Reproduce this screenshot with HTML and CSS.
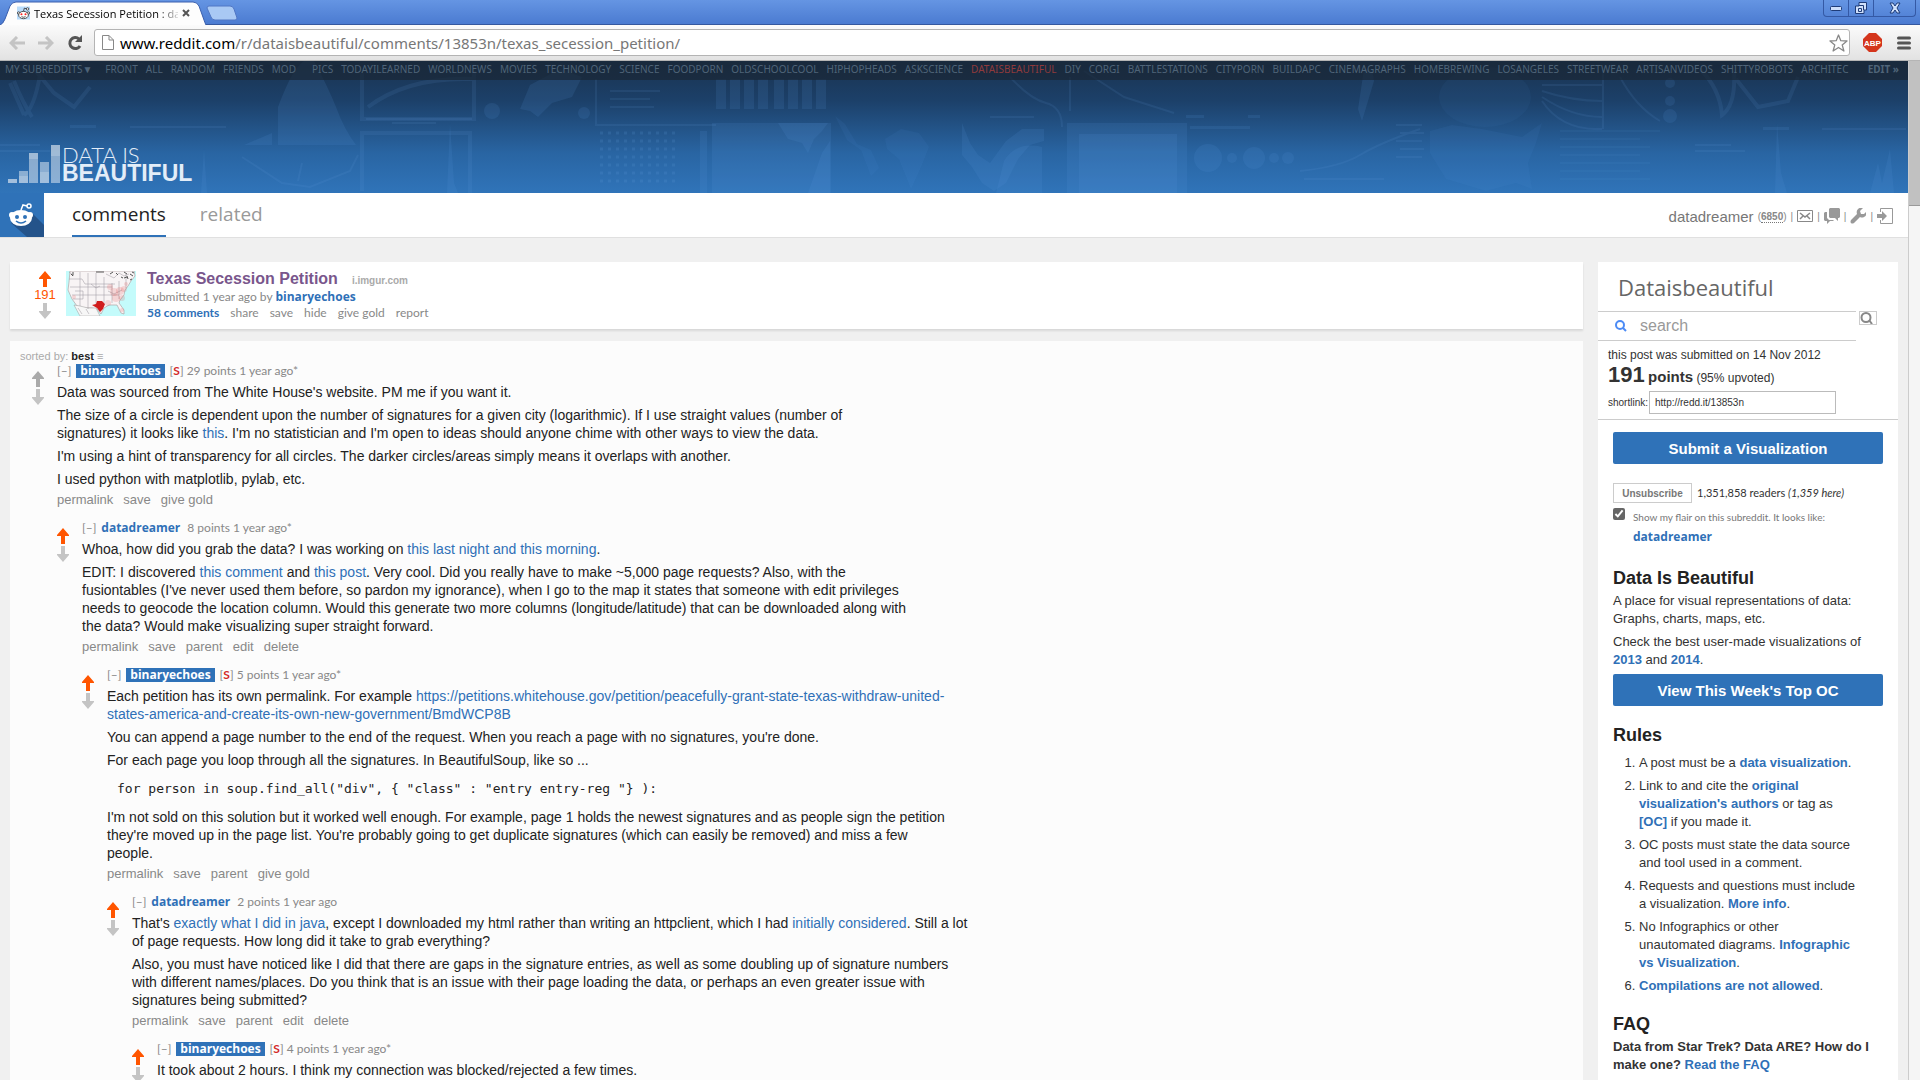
FILE: index.html
```html
<!DOCTYPE html>
<html lang="en">
<head>
    <meta charset="utf-8">
    <title>Texas Secession Petition : dataisbeautiful</title>
    <link rel="stylesheet" href="styles.css">
</head>
<body>
    <svg width="0" height="0" class="defs">
        <symbol id="up" viewBox="0 0 12 16"><path d="M6 0l6 7v1H8v8H4V8H0V7z"/></symbol>
        <symbol id="down" viewBox="0 0 12 16"><path d="M6 16l6-7V8H8V0H4v8H0v1z"/></symbol>
    </svg>

    <!-- browser window -->
    <div class="titlebar">
        <div class="tab">
            <svg class="tab-shape" width="206" height="24" viewBox="0 0 206 24"><path d="M0 24q3-1 5-6L10 5q2-4 6-4h177q4 0 6 4l5 14q1 3 2 5z" fill="#fdfdfd"/><path d="M0 24q3-1 5-6L10 5q2-4 6-4h177q4 0 6 4l5 14q1 3 2 5" fill="none" stroke="#3a5fae"/></svg>
            <svg class="favicon" width="16" height="16" viewBox="0 0 16 16"><path fill="#b9dcfb" d="M0 0h16v16H0z"/><path d="M8 6l1-4 3 1" fill="none" stroke="#333"/><circle cx="13" cy="3" r="1.5" fill="#fff" stroke="#333"/><circle cx="2" cy="8" r="1.5" fill="#fff" stroke="#333"/><circle cx="14" cy="8" r="1.5" fill="#fff" stroke="#333"/><ellipse cx="8" cy="10.500" rx="6" ry="4.500" fill="#fff" stroke="#333"/><circle cx="5.500" cy="9.500" r="1.300" fill="#f22"/><circle cx="10.500" cy="9.500" r="1.300" fill="#f22"/><path d="M5.500 12.500q2.500 1.500 5 0" fill="none" stroke="#333"/></svg>
            <span class="tab-title">Texas Secession Petition : da</span>
            <button class="plain" aria-label="Close tab"><svg width="8" height="8" viewBox="0 0 8 8"><path d="M1 1l6 6M7 1L1 7" stroke="#555" stroke-width="2"/></svg></button>
        </div>
        <button class="plain newtab" aria-label="New tab"><svg width="32" height="16" viewBox="0 0 32 16"><path d="M3 1h21q3 0 4 3l3 9q0 2-2 2H9q-3 0-4-3L1 3q0-2 2-2z" fill="#a9c9f4" stroke="#5177c4"/></svg></button>
        <div class="winbtns">
            <button class="plain" aria-label="Minimize"><svg width="12" height="8" viewBox="0 0 12 8"><rect x=".5" y="2.500" width="11" height="4" rx="1" fill="#cfe0fb" stroke="#1f3c78"/></svg></button>
            <button class="plain" aria-label="Restore"><svg width="14" height="14" viewBox="0 0 14 14"><path d="M5 1.500h7.500v7.500H10v3.500H1.500V5H5z" fill="#cfe0fb" stroke="#1f3c78"/><path d="M4.500 7.500h3v3h-3zM9.500 9V4.500H5" fill="none" stroke="#1f3c78"/></svg></button>
            <button class="plain close" aria-label="Close"><svg width="12" height="12" viewBox="0 0 12 12"><path d="M1 1h3l2 3 2-3h3L8 6l3 5H8L6 8l-2 3H1l3-5z" fill="#cfe0fb" stroke="#1f3c78"/></svg></button>
        </div>
    </div>
    <div class="toolbar">
        <button class="plain" aria-label="Back"><svg width="16" height="14" viewBox="0 0 16 14"><path d="M8 1L2 7l6 6M2 7h14" fill="none" stroke="#c4c4c4" stroke-width="3"/></svg></button>
        <button class="plain" aria-label="Forward"><svg width="16" height="14" viewBox="0 0 16 14"><path d="M8 1l6 6-6 6M14 7H0" fill="none" stroke="#c4c4c4" stroke-width="3"/></svg></button>
        <button class="plain" aria-label="Reload"><svg width="16" height="16" viewBox="0 0 16 16"><path d="M12 4A5.500 5.500 0 1 0 13 11" fill="none" stroke="#555" stroke-width="3"/><path d="M15 0v7H8z" fill="#555"/></svg></button>
        <div class="omnibox">
            <svg width="12" height="15" viewBox="0 0 12 15"><path d="M.5.500H7L11.500 5v9.500H.5zM7 .5V5h4.500" fill="#fff" stroke="#888"/></svg>
            <div class="url"><b>www.reddit.com</b>/r/dataisbeautiful/comments/13853n/texas_secession_petition/</div>
            <svg width="19" height="18" viewBox="0 0 19 18"><path d="M9.500 1l2.300 5.700 6.200.3-4.800 3.900 1.700 6.100-5.400-3.500L4.100 17l1.700-6.100L1 7l6.200-.3z" fill="#fff" stroke="#888" stroke-width="1.300" stroke-linejoin="round"/></svg>
        </div>
        <button class="plain" aria-label="AdBlock Plus"><svg width="19" height="19" viewBox="0 0 19 19"><path d="M6 0h7l6 6v7l-6 6H6l-6-6V6z" fill="#d4351c"/><text x="9.500" y="13" text-anchor="middle" class="abp">ABP</text></svg></button>
        <button class="plain menu" aria-label="Menu"><svg width="14" height="14" viewBox="0 0 14 14"><path d="M1.500 2h11M1.500 7h11M1.500 12h11" stroke="#555" stroke-width="3" stroke-linecap="round"/></svg></button>
    </div>

    <div class="viewport">
        <div class="page">
            <header class="header">
                <svg class="collage" viewBox="0 0 1908 132" preserveAspectRatio="xMinYMin slice">
                    <g fill="#5b9be0" fill-opacity=".13">
                        <path d="M278 84V46q6-16 12-28 8-14 14-18h10q14 26 22 46 8 22 20 38z"/><path d="M244 84l28-12v12z"/>
                        <path d="M716 18h10v30h-10zM730 18h10v30h-10zM744 18h10v30h-10zM758 18h10v30h-10zM774 18h10v30h-10zM788 18h10v30h-10zM802 18h10v30h-10zM816 18h10v30h-10zM700 70h7v62h-7z"/>
                        <path d="M712 62h119v70h-119z"/><path d="M778 62h50l-6 8-8 8-6 14-6-10-14-4z"/>
                        <path d="M822 92l8-12v52h-22z"/>
                        <path d="M835 55l10 8 12 20 14 6 8 18-8 8-10-26-14-10zM885 78l16-10 18 4 10 14-8 20-10 22-12-30-12-10z" fill-opacity=".08"/>
                        <path d="M962 62l8 20 8 12 12 8 16-22 16-12h22v12l-14 4-12 14-12 24-12 8-12-8-10-16-10-12z"/><path d="M1004 100q12-20 38-14v46h-46z"/>
                        <path d="M1067 62h120v70h-120z"/><path d="M1079 73h98v59h-98z"/>
                        <circle cx="1208" cy="97" r="14"/><circle cx="1232" cy="97" r="5"/><circle cx="1254" cy="97" r="11"/><circle cx="1274" cy="97" r="5"/><circle cx="1288" cy="97" r="6"/>
                        <path d="M1186 54h18v3h-18zM1248 54h12v3h-12zM1190 65h60v3h-60zM1362 60l12-40-2-12h-8l-6 40z"/>
                        <ellipse cx="1485" cy="36" rx="46" ry="30" fill-opacity=".06"/>
                        <path d="M1430 70l22-6 30 4 40 8 20-14-6 20-8 20 4 26-16-6-30 8-40-12-16-26z" fill-opacity=".08"/>
                        <circle cx="1670" cy="22" r="5"/><circle cx="1670" cy="40" r="5"/><circle cx="1670" cy="55" r="7"/>
                        <path d="M1775 132l2-70 4 50 6 20zM1870 132l8-30 4 20 8-34 4 44zM201 132l3-44 3 44zM447 132l3-70 4 60 4 10z"/>
                        <circle cx="492" cy="50" r="8"/><circle cx="584" cy="52" r="6"/><path d="M520 48l10-24 30-16 22 8-10 20-20 6-14 14-8-6zM70 64h26v3H70zM1763 66h26v3h-26z"/>
                    </g>
                    <g fill="none" stroke="#6aa6e6" stroke-opacity=".11" stroke-width="2">
                        <path d="M14 20q8 20 18 36M34 8l20 24 20 14 16-20M10 22l14 32M24 54q10-6 16-40" stroke-width="4"/>
                        <path d="M1700 8q20 20 22 46 14-10 12-44M1736 18l22 28 30-6 10-24" stroke-width="4"/>
                        <path d="M362 12v46h112V10M368 46q40-30 104-28M362 130V72h108v60" stroke-width="4"/>
                        <path d="M242 96l40 26 28 4 40-16 8-16M298 120l4-18M366 58h106"/>
                        <path d="M596 18v46h120M610 30h50M610 38h40M610 46h44M1010 16q20 22 36 26t16 24M1084 10l40 26 50 16M1070 16v34"/>
                        <path d="M1300 110q40-4 60-16t60-26M1304 118h80M1396 64h26M1400 72h24M1396 80h26M1400 88h24M1396 96h26"/>
                        <path d="M1542 24h60M1542 30q30 10 60 10M1542 36q30 20 60 20M1542 40q20 30 60 28M1603 12v56M1620 16q16 30 40 44"/>
                        <path d="M1560 70h100M1560 78h80M1560 86h90M1560 94h80M1560 102h90M1560 110h80M1560 118h90" stroke-opacity=".07"/>
                        <path d="M1695 84h36M1695 90h50M0 84h40M0 90h50M130 66h96M1822 68h84M392 62h44M990 56h44"/>
                    </g>
                    <g stroke="#6aa6e6" stroke-opacity=".15" stroke-width="3" stroke-dasharray="3 5"><path d="M600 72h80M600 80h80M600 88h80M600 96h80M600 104h80M600 112h80M600 120h80"/></g>
                </svg>
                <nav class="sr-bar">
                    <div class="sr-list">
                        <a href="#" class="my">MY SUBREDDITS▼</a>
                        <a href="#">FRONT</a><a href="#">ALL</a><a href="#">RANDOM</a><a href="#">FRIENDS</a><a href="#">MOD</a><a href="#" class="first">PICS</a><a href="#">TODAYILEARNED</a><a href="#">WORLDNEWS</a><a href="#">MOVIES</a><a href="#">TECHNOLOGY</a><a href="#">SCIENCE</a><a href="#">FOODPORN</a><a href="#">OLDSCHOOLCOOL</a><a href="#">HIPHOPHEADS</a><a href="#">ASKSCIENCE</a><a href="#" class="current">DATAISBEAUTIFUL</a><a href="#">DIY</a><a href="#">CORGI</a><a href="#">BATTLESTATIONS</a><a href="#">CITYPORN</a><a href="#">BUILDAPC</a><a href="#">CINEMAGRAPHS</a><a href="#">HOMEBREWING</a><a href="#">LOSANGELES</a><a href="#">STREETWEAR</a><a href="#">ARTISANVIDEOS</a><a href="#">SHITTYROBOTS</a><a href="#">ARCHITEC</a>
                    </div>
                    <a href="#" class="sr-edit">EDIT »</a>
                </nav>
                <a href="#" class="logo">
                    <svg width="52" height="38" viewBox="0 0 52 38"><g fill="#fff" fill-opacity=".45"><path d="M0 34h9v4H0zM11 26h9v12h-9zM21 8h9v30h-9zM32 17h9v21h-9zM43 0h9v38h-9z"/><path d="M0 34h9v4H0zM11 31h9v7h-9zM21 8h9v6h-9zM32 27h9v11h-9zM43 0h9v11h-9z" fill-opacity=".2"/></g></svg>
                    <span class="logo-text"><span class="thin">DATA IS</span><strong>BEAUTIFUL</strong></span>
                </a>
            </header>

            <div class="tabbar">
                <a href="#" class="snoo"><svg width="44" height="44" viewBox="0 0 44 44"><path fill="#2f72b8" d="M0 0h44v44H0z"/><path d="M32 20l12 12v12H27L11 30z" fill="#24538a"/><g fill="#fff"><circle cx="12" cy="22" r="3"/><circle cx="30" cy="22" r="3"/><ellipse cx="21" cy="25" rx="11" ry="8"/></g><path d="M21 17l2-5 4 1" fill="none" stroke="#fff" stroke-width="1.500"/><circle cx="29" cy="13" r="2" fill="none" stroke="#fff" stroke-width="1.500"/><circle cx="17" cy="24" r="2" fill="#2f72b8"/><circle cx="25" cy="24" r="2" fill="#2f72b8"/><path d="M16 28q5 4 10 0" fill="none" stroke="#2f72b8" stroke-width="1.500"/></svg></a>
                <nav class="tabs">
                    <a href="#" class="selected">comments</a>
                    <a href="#">related</a>
                </nav>
                <div class="user">
                    <a href="#" class="me">datadreamer</a>
                    <span>(<b>6850</b>)</span>
                    <i>|</i>
                    <a href="#" aria-label="messages"><svg width="16" height="12" viewBox="0 0 16 12"><path d="M.5.500h15v11H.5z" fill="#fff" stroke="#888"/><path d="M3 3l5 4 5-4M3 9l3-3M13 9l-3-3" fill="none" stroke="#888" stroke-width="1.500"/></svg></a>
                    <i>|</i>
                    <a href="#" aria-label="chat"><svg width="16" height="16" viewBox="0 0 16 16"><path d="M6 0h9l1 1v8l-1 1h-1v3l-3-3H6L5 9V1zM1 4h2v6l2 2h4l1 1H6l-3 3v-3H1l-1-1V5z" fill="#999"/></svg></a>
                    <i>|</i>
                    <a href="#" aria-label="preferences"><svg width="16" height="16" viewBox="0 0 16 16"><path d="M13 0l-3 3 1 3 3 0 2-2q1 4-2 5-2 1-4 0l-6 6q-2 1-3 0t0-3l6-6Q6 3 8 1q2-2 5-1z" fill="#999"/></svg></a>
                    <i>|</i>
                    <a href="#" aria-label="logout"><svg width="16" height="16" viewBox="0 0 16 16"><path d="M3.500 4V.5h12v15h-12V12" fill="none" stroke="#999"/><path d="M0 6h5V3l5 5-5 5v-3H0z" fill="#999"/></svg></a>
                </div>
            </div>

            <div class="columns">
                <main class="content">
                    <section class="post">
                        <div class="votes">
                            <button class="plain up on" aria-label="upvote"><svg width="12" height="16"><use href="#up"/></svg></button>
                            <span class="score">191</span>
                            <button class="plain down" aria-label="downvote"><svg width="12" height="16"><use href="#down"/></svg></button>
                        </div>
                        <svg class="thumb" width="70" height="45" viewBox="0 0 70 45">
                            <path fill="#c4fbfb" d="M0 0h70v45H0z"/>
                            <path d="M4 0h64l1 5-4 5-3 5-3 4-1 5-4 5-1 3 5 7v4l-3-1-4-8-8 0-5 3-3 6-4-5-5-1-8 0-7-2-5-7-4-9 1-8z" fill="#f8f4f5" stroke="#a99" stroke-width=".6"/>
                            <path d="M8 34l6 1 8 2 8 0 4 8H14z" fill="#f7f7f7" stroke="#999" stroke-width=".5"/>
                            <path d="M3 8h13l3 5h30M4 16h42M6 24h47M9 20h8v8H7M14 1v34M22 2v36M30 2v32M38 6v26M46 12v20M53 10v18M60 3v14M3 1l5 4M40 3l8 4 5-5 5 3 5-2M25 13l5 4 4-2M42 20l6 3 8-4M12 37l4 6M20 38l3 5" fill="none" stroke="#9a949c" stroke-width=".5"/>
                            <path d="M50 2l2 2M58 1l3 2M64 3l3 2M44 3l3-2M58 7l3-1M64 9l2-1M5 3l2 2M7 1v3M30 1l8 0M55 6l2 1M61 5l1 3M66 1l2 1" stroke="#555"/>
                            <path d="M31 30h5l3 3-2 5-3 3-3-4-5-3 4-1z" fill="#d01c1c"/>
                            <g fill="#e03030" fill-opacity=".16"><circle cx="48" cy="21" r="4"/><circle cx="54" cy="20" r="4"/><circle cx="50" cy="27" r="4"/><circle cx="58" cy="18" r="3"/><circle cx="60" cy="13" r="2"/><circle cx="42" cy="32" r="3"/><circle cx="56" cy="39" r="2"/><circle cx="8" cy="26" r="2"/><circle cx="44" cy="16" r="3"/><circle cx="56" cy="27" r="3"/></g>
                        </svg>
                        <div class="post-entry">
                            <p class="title"><a href="#">Texas Secession Petition</a><span class="domain">i.imgur.com</span></p>
                            <p class="tagline">submitted 1 year ago by <a href="#" class="author">binaryechoes</a></p>
                            <p class="links"><a href="#" class="count">58 comments</a><a href="#">share</a><a href="#">save</a><a href="#">hide</a><a href="#">give gold</a><a href="#">report</a></p>
                        </div>
                    </section>

                    <section class="comments">
                        <p class="sort">sorted by: <b>best</b> ≡</p>
                        <div class="comment">
                            <div class="votes">
                                <button class="plain up" aria-label="upvote"><svg width="12" height="16"><use href="#up"/></svg></button>
                                <button class="plain down" aria-label="downvote"><svg width="12" height="16"><use href="#down"/></svg></button>
                            </div>
                            <div class="entry">
                                <p class="tagline"><a href="#">[–]</a><a href="#" class="author op">binaryechoes</a>[<b class="s">S</b>] 29 points 1 year ago*</p>
                                <div class="md">
                                    <p>Data was sourced from The White House's website. PM me if you want it.</p>
                                    <p>The size of a circle is dependent upon the number of signatures for a given city (logarithmic). If I use straight values (number of signatures) it looks like <a href="#">this</a>. I'm no statistician and I'm open to ideas should anyone chime with other ways to view the data.</p>
                                    <p>I'm using a hint of transparency for all circles. The darker circles/areas simply means it overlaps with another.</p>
                                    <p>I used python with matplotlib, pylab, etc.</p>
                                </div>
                                <p class="flat"><a href="#">permalink</a><a href="#">save</a><a href="#">give gold</a></p>

                                <div class="comment">
                                    <div class="votes">
                                        <button class="plain up on" aria-label="upvote"><svg width="12" height="16"><use href="#up"/></svg></button>
                                        <button class="plain down" aria-label="downvote"><svg width="12" height="16"><use href="#down"/></svg></button>
                                    </div>
                                    <div class="entry">
                                        <p class="tagline"><a href="#">[–]</a><a href="#" class="author">datadreamer</a>8 points 1 year ago*</p>
                                        <div class="md">
                                            <p>Whoa, how did you grab the data? I was working on <a href="#">this last night and this morning</a>.</p>
                                            <p>EDIT: I discovered <a href="#">this comment</a> and <a href="#">this post</a>. Very cool. Did you really have to make ~5,000 page requests? Also, with the fusiontables (I've never used them before, so pardon my ignorance), when I go to the map it states that someone with edit privileges needs to geocode the location column. Would this generate two more columns (longitude/latitude) that can be downloaded along with the data? Would make visualizing super straight forward.</p>
                                        </div>
                                        <p class="flat"><a href="#">permalink</a><a href="#">save</a><a href="#">parent</a><a href="#">edit</a><a href="#">delete</a></p>

                                        <div class="comment">
                                            <div class="votes">
                                                <button class="plain up on" aria-label="upvote"><svg width="12" height="16"><use href="#up"/></svg></button>
                                                <button class="plain down" aria-label="downvote"><svg width="12" height="16"><use href="#down"/></svg></button>
                                            </div>
                                            <div class="entry">
                                                <p class="tagline"><a href="#">[–]</a><a href="#" class="author op">binaryechoes</a>[<b class="s">S</b>] 5 points 1 year ago*</p>
                                                <div class="md">
                                                    <p>Each petition has its own permalink. For example <a href="#">https://petitions.whitehouse.gov/petition/peacefully-grant-state-texas-withdraw-united-states-america-and-create-its-own-new-government/BmdWCP8B</a></p>
                                                    <p>You can append a page number to the end of the request. When you reach a page with no signatures, you're done.</p>
                                                    <p>For each page you loop through all the signatures. In BeautifulSoup, like so ...</p>
                                                    <pre><code>for person in soup.find_all("div", { "class" : "entry entry-reg "} ):</code></pre>
                                                    <p>I'm not sold on this solution but it worked well enough. For example, page 1 holds the newest signatures and as people sign the petition they're moved up in the page list. You're probably going to get duplicate signatures (which can easily be removed) and miss a few people.</p>
                                                </div>
                                                <p class="flat"><a href="#">permalink</a><a href="#">save</a><a href="#">parent</a><a href="#">give gold</a></p>

                                                <div class="comment">
                                                    <div class="votes">
                                                        <button class="plain up on" aria-label="upvote"><svg width="12" height="16"><use href="#up"/></svg></button>
                                                        <button class="plain down" aria-label="downvote"><svg width="12" height="16"><use href="#down"/></svg></button>
                                                    </div>
                                                    <div class="entry">
                                                        <p class="tagline"><a href="#">[–]</a><a href="#" class="author">datadreamer</a>2 points 1 year ago</p>
                                                        <div class="md">
                                                            <p>That's <a href="#">exactly what I did in java</a>, except I downloaded my html rather than writing an httpclient, which I had <a href="#">initially considered</a>. Still a lot of page requests. How long did it take to grab everything?</p>
                                                            <p>Also, you must have noticed like I did that there are gaps in the signature entries, as well as some doubling up of signature numbers with different names/places. Do you think that is an issue with their page loading the data, or perhaps an even greater issue with signatures being submitted?</p>
                                                        </div>
                                                        <p class="flat"><a href="#">permalink</a><a href="#">save</a><a href="#">parent</a><a href="#">edit</a><a href="#">delete</a></p>

                                                        <div class="comment">
                                                            <div class="votes">
                                                                <button class="plain up on" aria-label="upvote"><svg width="12" height="16"><use href="#up"/></svg></button>
                                                                <button class="plain down" aria-label="downvote"><svg width="12" height="16"><use href="#down"/></svg></button>
                                                            </div>
                                                            <div class="entry">
                                                                <p class="tagline"><a href="#">[–]</a><a href="#" class="author op">binaryechoes</a>[<b class="s">S</b>] 4 points 1 year ago*</p>
                                                                <div class="md">
                                                                    <p>It took about 2 hours. I think my connection was blocked/rejected a few times.</p>
                                                                </div>
                                                            </div>
                                                        </div>
                                                    </div>
                                                </div>
                                            </div>
                                        </div>
                                    </div>
                                </div>
                            </div>
                        </div>
                    </section>
                </main>

                <aside class="side">
                    <h1>Dataisbeautiful</h1>
                    <form class="search">
                        <div class="search-box">
                            <svg width="12" height="12" viewBox="0 0 12 12"><circle cx="5" cy="5" r="4" fill="none" stroke="#4c8bf5" stroke-width="2"/><path d="M8 8l3 3" stroke="#4c8bf5" stroke-width="2"/></svg>
                            <input type="text" placeholder="search" aria-label="search">
                        </div>
                        <button aria-label="Submit search"><svg width="13" height="12" viewBox="0 0 13 12"><circle cx="6" cy="5.500" r="4.500" fill="none" stroke="#888" stroke-width="2"/><path d="M9 8l3 4" stroke="#888" stroke-width="2"/></svg></button>
                    </form>
                    <div class="linkinfo">
                        <p>this post was submitted on 14 Nov 2012</p>
                        <p class="points"><b class="num">191</b> <b class="word">points</b> (95% upvoted)</p>
                        <p class="shortlink"><label for="shortlink">shortlink:</label><input type="text" id="shortlink" value="http://redd.it/13853n" readonly></p>
                    </div>
                    <div class="side-body">
                        <button class="big">Submit a Visualization</button>
                        <p class="subs"><button class="unsub">Unsubscribe</button><span>1,351,858 readers <em>(1,359 here)</em></span></p>
                        <p class="flair"><input type="checkbox" id="flair" checked><label for="flair">Show my flair on this subreddit. It looks like:</label></p>
                        <p class="flair-name"><a href="#" class="author">datadreamer</a></p>

                        <h2>Data Is Beautiful</h2>
                        <p>A place for visual representations of data: Graphs, charts, maps, etc.</p>
                        <p>Check the best user-made visualizations of <a href="#">2013</a> and <a href="#">2014</a>.</p>
                        <button class="big">View This Week's Top OC</button>

                        <h2>Rules</h2>
                        <ol>
                            <li>A post must be a <a href="#">data visualization</a>.</li>
                            <li>Link to and cite the <a href="#">original visualization's authors</a> or tag as <a href="#">[OC]</a> if you made it.</li>
                            <li>OC posts must state the data source and tool used in a comment.</li>
                            <li>Requests and questions must include a visualization. <a href="#">More info</a>.</li>
                            <li>No Infographics or other unautomated diagrams. <a href="#">Infographic vs Visualization</a>.</li>
                            <li><a href="#">Compilations are not allowed</a>.</li>
                        </ol>

                        <h2>FAQ</h2>
                        <p><b>Data from Star Trek? Data ARE? How do I make one? <a href="#">Read the FAQ</a></b></p>
                    </div>
                </aside>
            </div>
        </div>
        <div class="scrollbar"><div class="thumb-bar"></div></div>
    </div>
</body>
</html>
```
FILE: styles.css
```css
* {
    box-sizing: border-box;
}
body {
    margin: 0;
    height: 100vh;
    overflow: hidden;
    display: flex;
    flex-direction: column;
    background: #f0f0f0;
    font-family: "Liberation Sans", Arial, sans-serif;
    font-size: 13px;
    color: #222;
}
p, h1, h2, ol, pre {
    margin: 0;
}
a {
    color: #2f70b7;
    text-decoration: none;
}
svg {
    display: block;
}
.defs {
    position: absolute;
}
.plain {
    border: 0;
    padding: 0;
    background: none;
    display: flex;
    align-items: center;
    justify-content: center;
}

/* browser window */
.titlebar {
    height: 25px;
    display: flex;
    background: linear-gradient(#6595e3, #4b7bd1);
    border-bottom: 1px solid #35589f;
    flex-shrink: 0;
}
.tab {
    position: relative;
    width: 206px;
    display: flex;
    align-items: center;
    padding: 2px 16px 0 17px;
    gap: 4px;
}
.tab-shape {
    position: absolute;
    left: 0;
    top: 1px;
}
.favicon, .tab-title, .tab .plain {
    position: relative;
}
.tab-title {
    width: 144px;
    white-space: nowrap;
    font-family: "Open Sans", sans-serif;
    font-size: 11px;
    color: #000;
    -webkit-mask-image: linear-gradient(90deg, #000 124px, transparent 148px);
}
.newtab {
    margin-top: 5px;
    align-self: flex-start;
}
.winbtns {
    margin: 0 4px 0 auto;
    height: 17px;
    display: flex;
    border: 1px solid #3459a5;
    border-top: 0;
    border-radius: 0 0 4px 4px;
}
.winbtns .plain {
    width: 25px;
    border-right: 1px solid #3459a5;
}
.winbtns .close {
    width: 41px;
    border-right: 0;
}
.toolbar {
    height: 36px;
    display: flex;
    align-items: center;
    gap: 13px;
    padding: 0 9px;
    background: linear-gradient(#fbfbfb, #e2e2e2);
    border-bottom: 1px solid #b5b5b5;
    flex-shrink: 0;
}
.toolbar .menu {
    margin-left: 2px;
}
.omnibox {
    flex: 1;
    height: 27px;
    margin-left: -2px;
    display: flex;
    align-items: center;
    gap: 6px;
    padding: 0 1px 0 7px;
    background: #fff;
    border: 1px solid #b4b4b4;
    border-radius: 3px;
}
.url {
    flex: 1;
    font-family: "Noto Sans", sans-serif;
    font-size: 15px;
    color: #777;
}
.url b {
    font-weight: normal;
    color: #000;
}
.abp {
    font: bold 8px "Liberation Sans", Arial, sans-serif;
    fill: #fff;
}
.viewport {
    flex: 1;
    display: flex;
    min-height: 0;
}
.page {
    flex: 1;
    min-width: 0;
    overflow: hidden;
}
.scrollbar {
    width: 12px;
    background: #f5f5f5;
    border-left: 1px solid #ccc;
}
.thumb-bar {
    height: 145px;
    background: #c1c1c1;
    border-bottom: 1px solid #999;
}

/* header */
.header {
    position: relative;
    height: 132px;
    display: flex;
    flex-direction: column;
    justify-content: space-between;
    background: linear-gradient(#1a3350, #1c4069 30%, #2965a3 70%, #3074b9);
}
.collage {
    position: absolute;
    width: 100%;
    height: 132px;
}
.sr-bar {
    position: relative;
    height: 19px;
    line-height: 17px;
    display: flex;
    padding: 0 9px 0 5px;
    gap: 12px;
    background: rgba(25, 38, 52, .7);
    font-family: "Noto Sans", sans-serif;
    font-size: 10px;
}
.sr-list {
    flex: 1;
    display: flex;
    gap: 8px;
    overflow: hidden;
    white-space: nowrap;
}
.sr-bar a {
    color: #4f6478;
}
.sr-list .my {
    margin-right: 5px;
}
.sr-list .first {
    margin-left: 8px;
}
.sr-list .current {
    color: #8f3a3c;
}
.sr-edit {
    font-weight: bold;
}
.logo {
    position: relative;
    display: flex;
    align-items: flex-end;
    gap: 2px;
    padding: 0 8px 10px;
    color: #e3edf8;
}
.logo-text {
    display: flex;
    flex-direction: column;
    font-size: 23px;
    line-height: 19px;
}
.logo-text .thin {
    font-family: Lato, sans-serif;
    font-weight: 300;
    font-size: 22px;
}

.tabbar {
    height: 45px;
    display: flex;
    background: #fff;
    border-bottom: 1px solid #e0e0e0;
}
.tabs {
    display: flex;
    gap: 34px;
    margin-left: 28px;
    font-family: "Open Sans", sans-serif;
    font-size: 19px;
    line-height: 42px;
}
.tabs a {
    color: #999;
    border-bottom: 2px solid transparent;
}
.tabs .selected {
    color: #222;
    border-color: #2f72b8;
}
.user {
    display: flex;
    align-items: center;
    gap: 4px;
    margin: 2px 15px 0 auto;
    font-size: 10px;
    color: #888;
}
.user .me {
    font-size: 15px;
    color: #777;
}
.user b {
    border-bottom: 1px dotted #777;
}
.user i {
    font-style: normal;
}

/* main column */
.columns {
    display: flex;
    align-items: flex-start;
    gap: 15px;
    padding: 24px 10px 0;
}
.content {
    flex: 1;
    display: flex;
    flex-direction: column;
    gap: 12px;
}
.post {
    display: flex;
    padding: 9px 22px 9px;
    background: #fff;
    box-shadow: 0 2px 2px rgba(0, 0, 0, .1);
}
.votes {
    display: flex;
    flex-direction: column;
    align-items: center;
    gap: 2px;
    fill: #c4c4c4;
    flex-shrink: 0;
}
.votes .up {
    fill: #aaa;
}
.votes .on {
    fill: #ff5500;
}
.post .votes {
    width: 26px;
    gap: 0;
}
.score {
    font-size: 13px;
    line-height: 16px;
    color: #ff5500;
}
.thumb {
    margin: 0 11px 0 8px;
}
.title {
    font-size: 16px;
    line-height: 16px;
    font-weight: bold;
}
.title a {
    color: #79568c;
}
.domain {
    margin-left: 14px;
    font-size: 10px;
    color: #aaa;
}
.tagline {
    font-family: Lato, sans-serif;
    font-size: 12px;
    line-height: 14px;
    color: #888;
}
.tagline a {
    color: #888;
}
.post .tagline {
    margin: 1px 0 2px;
}
.author, .tagline .author {
    font-family: "Open Sans", sans-serif;
    font-size: 12px;
    line-height: 14px;
    font-weight: bold;
    color: #2f70b7;
}
.comment .tagline {
    display: flex;
    white-space: pre;
}
.comment .tagline .author {
    margin: 0 7px 0 5px;
}
.comment .tagline .op {
    margin: 0 5px;
    padding: 0 4px;
    background: #2f72b8;
    color: #fff;
}
.tagline .s {
    color: #d42a2a;
}
.links {
    display: flex;
    gap: 11px;
    font-family: Lato, sans-serif;
    font-size: 12px;
    line-height: 14px;
}
.links a {
    color: #888;
}
.links .count {
    font-weight: bold;
    color: #2f70b7;
}
.comments {
    padding: 8px 22px 0;
    background: #fcfcfc;
}
.sort {
    margin: 0 0 1px -12px;
    font-size: 11px;
    line-height: 14px;
    color: #aaa;
}
.sort b {
    color: #222;
    font-weight: bold;
}
.comment {
    display: flex;
    gap: 13px;
}
.comment .comment {
    margin-top: 14px;
}
.comment .votes {
    padding-top: 7px;
}
.md {
    max-width: 840px;
    margin: 5px 0;
    font-size: 14px;
    line-height: 18px;
}
.md p + p {
    margin-top: 5px;
}
.md pre {
    margin: 10px;
}
.md code {
    font-family: "DejaVu Sans Mono", monospace;
    font-size: 13px;
}
.flat {
    display: flex;
    gap: 10px;
    font-size: 13px;
    line-height: 14px;
}
.flat a {
    color: #888;
}

/* sidebar */
.side {
    width: 300px;
    background: #fff;
    padding-bottom: 40px;
    color: #333;
}
.side h1 {
    padding: 7px 20px 6px;
    font-family: "Open Sans", sans-serif;
    font-size: 22px;
    line-height: 36px;
    font-weight: normal;
    color: #666;
}
.search {
    display: flex;
    align-items: flex-start;
    gap: 3px;
}
.search-box {
    width: 258px;
    height: 30px;
    display: flex;
    align-items: center;
    gap: 13px;
    padding-left: 17px;
    border: 1px solid #ccc;
    border-width: 1px 0;
}
.search-box input {
    width: 200px;
    border: 0;
    padding: 0;
    font: 16px "Liberation Sans", Arial, sans-serif;
}
.search-box ::placeholder {
    color: #999;
}
.search button {
    width: 18px;
    height: 14px;
    padding: 0;
    border: 1px solid #ccc;
    background: #fff;
}
.linkinfo {
    padding: 6px 10px 5px;
    border-bottom: 1px solid #ccc;
    font-size: 12px;
    line-height: 16px;
}
.linkinfo .points {
    line-height: 24px;
}
.num {
    font-size: 22px;
}
.word {
    font-size: 15px;
}
.shortlink {
    display: flex;
    align-items: center;
    gap: 1px;
    margin-top: 1px;
    font-size: 10px;
}
.shortlink input {
    width: 187px;
    height: 23px;
    padding: 0 5px;
    border: 1px solid #bbb;
    font: 10px "Liberation Sans", Arial, sans-serif;
    color: #333;
}
.side-body {
    padding: 12px 15px 0;
    line-height: 18px;
}
.side-body a {
    font-weight: bold;
}
.big {
    width: 100%;
    height: 32px;
    border: 0;
    border-radius: 2px;
    background: #2f72b8;
    color: #fff;
    font: bold 15px "Liberation Sans", Arial, sans-serif;
}
.side-body .subs {
    display: flex;
    align-items: center;
    gap: 5px;
    margin-top: 19px;
    font-family: Lato, sans-serif;
    font-size: 11px;
}
.unsub {
    width: 79px;
    height: 20px;
    padding: 0;
    border: 1px solid #ccc;
    background: #fff;
    color: #777;
    font: bold 10px "Liberation Sans", Arial, sans-serif;
}
.side-body .flair {
    display: flex;
    gap: 8px;
    margin-top: 5px;
    font-family: Lato, sans-serif;
    font-size: 10px;
    color: #777;
}
.flair input {
    width: 12px;
    height: 12px;
    margin: 0;
    accent-color: #666;
}
.side-body .flair-name {
    margin: 2px 0 0 20px;
}
.side-body p {
    margin-top: 5px;
}
.side h2 {
    margin-top: 23px;
    font-size: 18px;
    line-height: 18px;
    color: #222;
}
.side .big + h2, .side ol + h2 {
    margin-top: 20px;
}
.side-body p + .big {
    margin-top: 5px;
}
.side ol {
    padding: 0 27px 0 26px;
    margin-top: 10px;
}
.side li + li {
    margin-top: 5px;
}
```
